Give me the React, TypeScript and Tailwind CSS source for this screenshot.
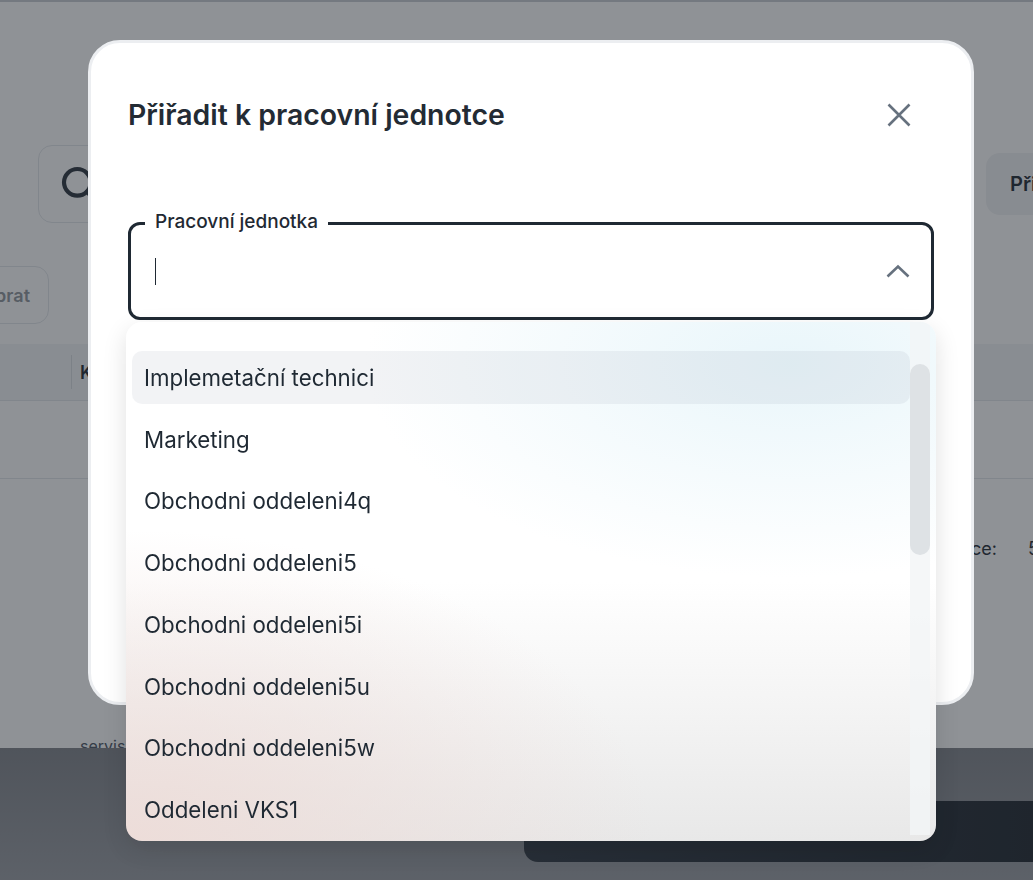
import React from 'react';
import { Search } from 'lucide-react';

const units = [
  'Implemetační technici',
  'Marketing',
  'Obchodni oddeleni4q',
  'Obchodni oddeleni5',
  'Obchodni oddeleni5i',
  'Obchodni oddeleni5u',
  'Obchodni oddeleni5w',
  'Oddeleni VKS1',
  'Oddeleni VKS2',
];

const CloseIcon = () => (
  <svg width="24" height="24" viewBox="0 0 24 24" fill="none">
    <path d="M1.5 1.5 22.5 22.5M22.5 1.5 1.5 22.5" stroke="#66717e" strokeWidth="2.6" />
  </svg>
);

const ChevronUp = () => (
  <svg width="24" height="14" viewBox="0 0 24 14" fill="none">
    <path d="M1.5 12.5 12 2.5l10.5 10" stroke="#66717e" strokeWidth="2.6" />
  </svg>
);

const PageBehind = () => (
  <div className="flex h-[880px] flex-col bg-white">
    <div className="h-[2px] bg-[#c9cdd2]" />
    {/* filters */}
    <div className="mt-[143px] flex items-center gap-[24px] pl-[38px]">
      <div className="flex h-[78px] flex-1 items-center rounded-[14px] border border-[#e3e6ea] pl-[20px]">
        <Search className="h-[40px] w-[40px] text-[#2b333c]" strokeWidth={2.5} />
      </div>
      <div className="mr-[-253px] flex h-[62px] w-[300px] shrink-0 items-center rounded-[14px] bg-[#f1f2f4] px-[24px] text-[20px] font-semibold whitespace-nowrap text-[#1f2933]">
        Přiřadit k pracovní jednotce
      </div>
    </div>
    <div className="mt-[43px] flex">
      <div className="ml-[-72px] flex h-[58px] w-[121px] items-center justify-end rounded-[14px] border border-[#e3e6ea] pr-[18px] text-[18px] font-semibold text-[#8f959b]">
        Odebrat
      </div>
    </div>
    {/* table */}
    <div className="mt-[20px] flex h-[57px] items-center border-b border-[#e3e6ea] bg-[#f3f4f6]">
      <div className="h-[34px] w-[72px] border-r border-[#d9dde1]" />
      <div className="pl-[8px] text-[18px] font-semibold text-[#1f2933]">Kód</div>
    </div>
    <div className="h-[78px] border-b border-[#e3e6ea]" />
    <div className="mt-[56px] flex justify-end gap-[31px] text-[18px] text-[#1f2933]">
      <span>Počet na stránce:</span>
      <span className="mr-[-6px]">5</span>
    </div>
    <div className="mt-[172px] pl-[80px] text-[16px] text-[#4b5563]">servis</div>
    <div className="mt-[-10px] flex flex-1 flex-col bg-gradient-to-b from-[#808389] to-[#9a9da3]">
      <div className="mt-[53px] ml-[524px] h-[61px] rounded-l-[14px] bg-gradient-to-r from-[#2f3741] to-[#1e252d]" />
    </div>
  </div>
);

export default function App() {
  return (
    <div className="relative h-[880px] overflow-hidden font-['Inter','Noto_Sans',sans-serif]">
      <PageBehind />
      <div className="fixed inset-0 bg-[#1f262e]/50" />

      <div className="fixed top-[40px] left-[88px] h-[665px] w-[886px] rounded-[32px] border-[3px] border-[#eceef1] bg-white">
        <div className="flex items-center justify-between pt-[49px] pr-[49px] pl-[37px]">
          <h2 className="text-[28.4px] leading-[34px] font-semibold text-[#232b34]">Přiřadit k pracovní jednotce</h2>
          <button className="flex h-[46px] w-[46px] items-center justify-center">
            <CloseIcon />
          </button>
        </div>

        <div className="relative mt-[84px] ml-[37px] h-[98px] w-[806px] rounded-[12px] border-[3px] border-[#1f2933]">
          <span className="absolute top-[-17px] left-[14px] bg-white px-[10px] text-[19px] leading-[28px] font-medium text-[#1f2933]">
            Pracovní jednotka
          </span>
          <div className="flex h-full items-center justify-between pr-[21px] pl-[24px]">
            <span className="h-[27px] w-px bg-[#1f2933]" />
            <ChevronUp />
          </div>

          <div className="absolute top-[97px] left-[-5px] flex h-[519px] w-[810px] overflow-hidden rounded-[16px] bg-[radial-gradient(ellipse_70%_55%_at_82%_8%,rgba(226,243,249,0.75),transparent_75%),radial-gradient(ellipse_65%_60%_at_0%_100%,rgba(237,220,216,0.95),transparent_100%),linear-gradient(to_bottom,#ffffff_50%,#e8e8e8)] shadow-[0_8px_24px_rgba(0,0,0,0.12)]">
            <ul className="flex flex-1 flex-col gap-[8.75px] pt-[29px] pl-[6px]">
              {units.map((u, i) => (
                <li
                  key={u}
                  className={`flex h-[53px] shrink-0 items-center rounded-[10px] pl-[12px] text-[22.3px] text-[#1f2933] ${
                    i === 0 ? 'bg-[#7d8ea0]/10' : ''
                  }`}
                >
                  {u}
                </li>
              ))}
            </ul>
            <div className="mr-[6px] mb-[6px] w-[20px] bg-[#f3f5f6]/80">
              <div className="mt-[42px] h-[191px] rounded-full bg-[#dee2e5]" />
            </div>
          </div>
        </div>
      </div>
    </div>
  );
}
